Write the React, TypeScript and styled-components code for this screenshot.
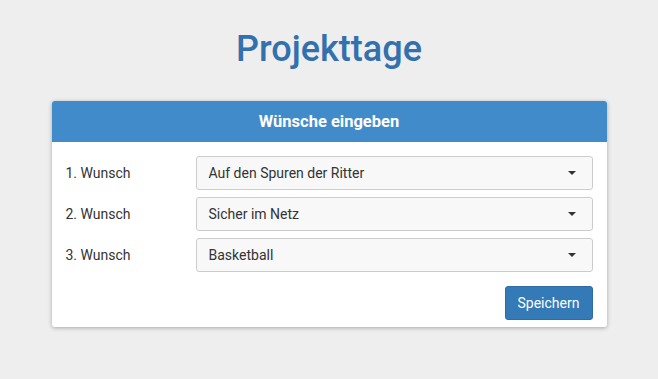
import React from "react";
import styled, { createGlobalStyle } from "styled-components";

const Global = createGlobalStyle`
  html, body { margin: 0; padding: 0; }
  body {
    background: #eeeeee;
    font-family: Roboto, "Liberation Sans", sans-serif;
    color: #333;
  }
`;

const Page = styled.div`
  width: 658px;
  height: 379px;
  display: flex;
  flex-direction: column;
  align-items: center;
`;

const Title = styled.h1`
  margin: 26px 0 0;
  height: 46px;
  line-height: 46px;
  font-size: 36px;
  font-weight: 500;
  color: #3271ad;
`;

const Card = styled.div`
  margin-top: 29px;
  width: 555px;
  background: #fff;
  border-radius: 3px;
  box-shadow: 0 1px 4px rgba(0, 0, 0, 0.3);
  overflow: hidden;
`;

const Header = styled.div`
  height: 41px;
  background: #428bca;
  color: #fff;
  font-weight: 700;
  font-size: 16.5px;
  display: flex;
  align-items: center;
  justify-content: center;
`;

const Body = styled.div`
  padding: 14px 14px 7px 14px;
  display: flex;
  flex-direction: column;
`;

const Rows = styled.div`
  display: grid;
  grid-template-columns: 130px 1fr;
  row-gap: 7px;
  align-items: center;
`;

const Label = styled.div`
  font-size: 14px;
  color: #333;
`;

const Select = styled.div`
  height: 34px;
  box-sizing: border-box;
  border: 1px solid #cccccc;
  border-radius: 3px;
  background: #f8f8f8;
  display: flex;
  align-items: center;
  justify-content: space-between;
  padding: 0 16px 0 12px;
  font-size: 14px;
  color: #333;
`;

const Caret = styled.span`
  width: 0;
  height: 0;
  border-left: 4px solid transparent;
  border-right: 4px solid transparent;
  border-top: 4px solid #333;
`;

const Footer = styled.div`
  display: flex;
  justify-content: flex-end;
  margin-top: 14px;
`;

const Button = styled.button`
  height: 34px;
  width: 88px;
  border: 1px solid #2e6da4;
  border-radius: 3px;
  background: #337ab7;
  color: #fff;
  font-family: Roboto, "Liberation Sans", sans-serif;
  font-size: 14px;
  padding: 0;
`;

const wishes = [
  { label: "1. Wunsch", value: "Auf den Spuren der Ritter" },
  { label: "2. Wunsch", value: "Sicher im Netz" },
  { label: "3. Wunsch", value: "Basketball" },
];

export default function App() {
  return (
    <>
      <Global />
      <Page>
        <Title>Projekttage</Title>
        <Card>
          <Header>Wünsche eingeben</Header>
          <Body>
            <Rows>
              {wishes.map((w) => (
                <React.Fragment key={w.label}>
                  <Label>{w.label}</Label>
                  <Select>
                    <span>{w.value}</span>
                    <Caret />
                  </Select>
                </React.Fragment>
              ))}
            </Rows>
            <Footer>
              <Button>Speichern</Button>
            </Footer>
          </Body>
        </Card>
      </Page>
    </>
  );
}
